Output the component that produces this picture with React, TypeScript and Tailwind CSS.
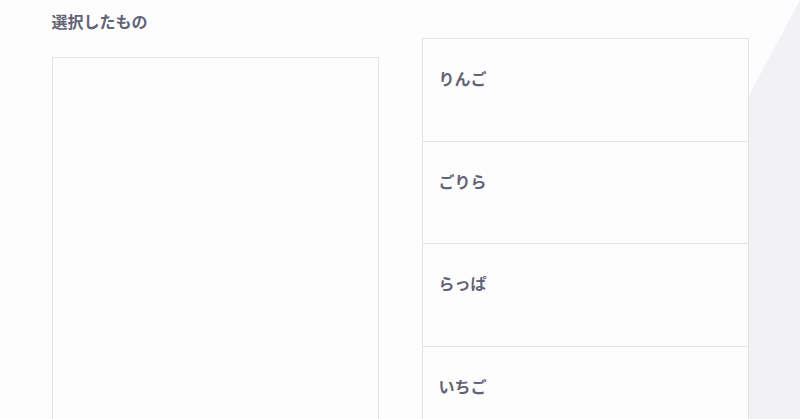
const items = ['りんご', 'ごりら', 'らっぱ', 'いちご'];

// 選択済みエリアと候補リストの2カラム
export default function App() {
  return (
    <div className="relative h-[419px] w-[800px] overflow-hidden bg-[#fdfdfe] font-['Noto_Sans_CJK_JP','Noto_Sans',sans-serif] text-[#626375]">
      {/* 右端の斜めの背景 */}
      <div className="absolute right-0 top-0 h-full w-[52px] bg-[#f2f2f5] [clip-path:polygon(100%_0,0_97px,0_100%,100%_100%)]" />

      <div className="relative mx-auto flex w-[697px] gap-[43px]">
        <div className="flex w-[327px] flex-col">
          <p className="mt-[11px] text-[16px] font-semibold leading-[20px]">選択したもの</p>
          <div className="mt-[26px] h-[400px] border border-[#e2e2e7] bg-[#fdfdfe]" />
        </div>

        <div className="mt-[38px] flex w-[327px] flex-col border border-[#e2e2e7] bg-[#fdfdfe]">
          {items.map((item, i) => (
            <div
              key={item}
              className={`px-4 pt-[29px] text-[16px] font-semibold leading-[20px] ${i > 0 ? 'h-[102.5px] border-t border-[#e2e2e7]' : 'h-[101.5px]'}`}
            >
              {item}
            </div>
          ))}
        </div>
      </div>
    </div>
  );
}
